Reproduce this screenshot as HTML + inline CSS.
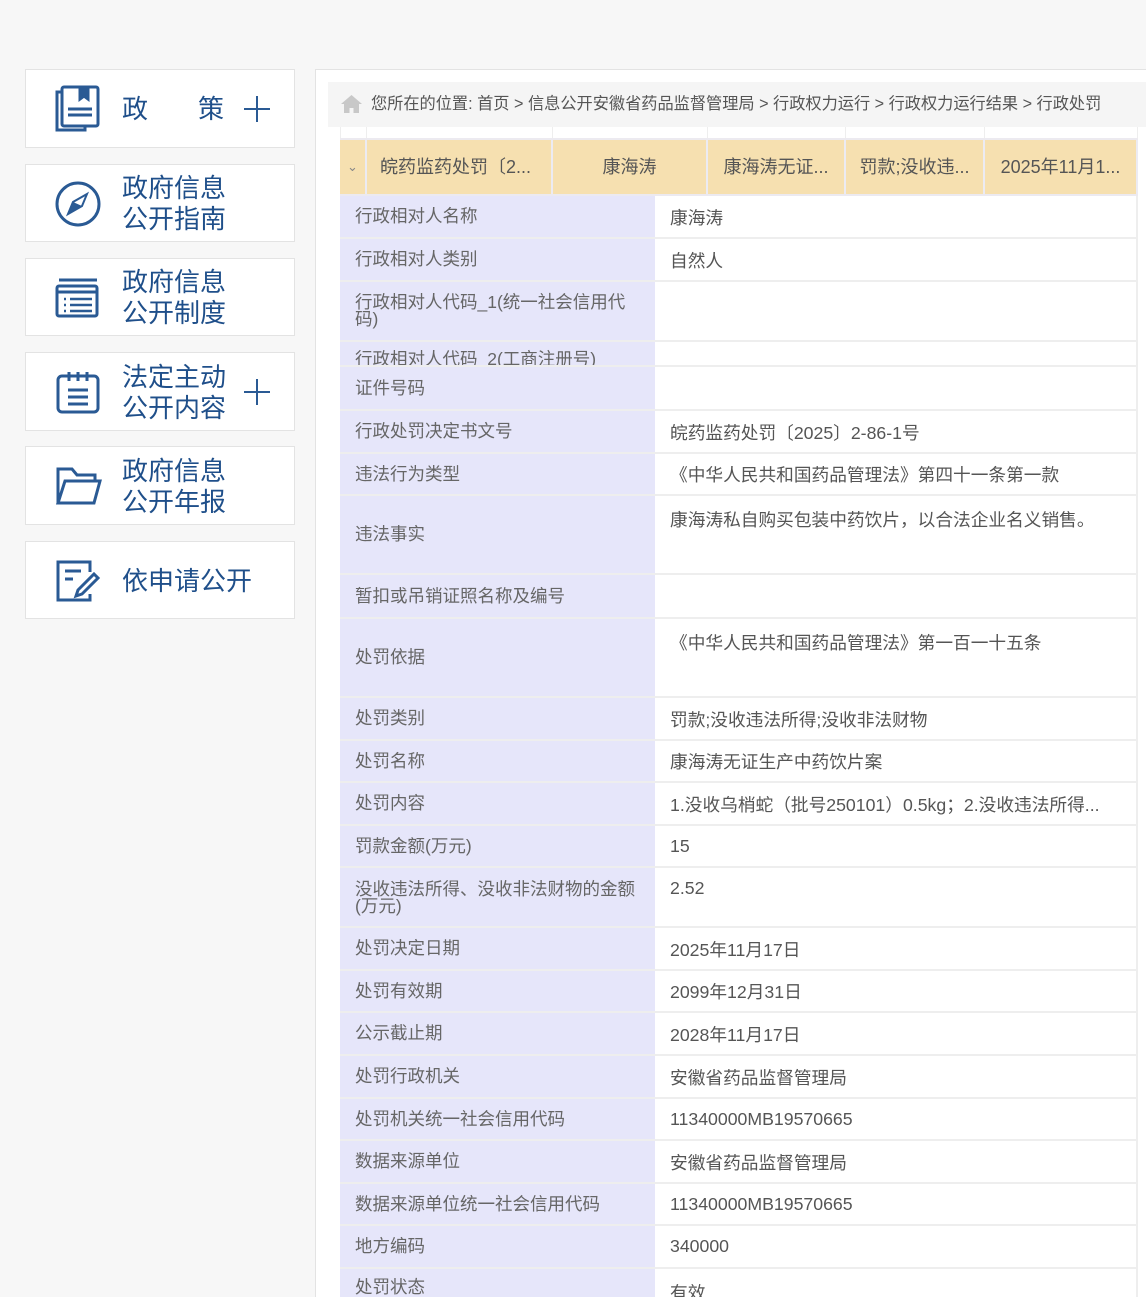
<!DOCTYPE html>
<html><head><meta charset="utf-8">
<style>
*{margin:0;padding:0;box-sizing:border-box}
html,body{width:1146px;height:1297px;overflow:hidden;background:#f7f7f7;font-family:"Liberation Sans","Noto Sans CJK SC",sans-serif;position:relative}
.nav{position:absolute;left:25px;width:270px;background:#fff;border:1px solid #e3e3e3}
.nav svg{position:absolute;left:28px}
.nav .t{position:absolute;left:96px;color:#1f4f8a;font-size:26px;line-height:31px}
.nav .p{position:absolute;left:218px;width:26px;height:26px}
.nav .p:before{content:"";position:absolute;left:0;top:12px;width:26px;height:2px;background:#2a5a94}
.nav .p:after{content:"";position:absolute;left:12px;top:0;width:2px;height:26px;background:#2a5a94}
.main{position:absolute;left:315px;top:69px;width:840px;height:1228px;background:#fff;border:1px solid #e3e3e3;border-bottom:none}
.bc{position:absolute;left:328px;top:82px;width:818px;height:45px;background:#f5f5f5;font-size:16.2px;color:#555;line-height:45px;padding-left:43px;white-space:nowrap}
.r{position:absolute;left:340px;width:798px;border-bottom:2px solid #eee;overflow:hidden}
.r .l{position:absolute;left:0;top:0;bottom:0;width:315px;background:#e6e6fa;color:#666;font-size:17.5px;padding:0 15px;display:flex;align-items:center;line-height:17px}
.r .v{position:absolute;left:315px;top:0;bottom:0;right:0;border-right:2px solid #eee;color:#555;font-size:17.7px;padding:0 15px;display:flex;align-items:center;white-space:nowrap}
.r .v.top{align-items:flex-start;padding-top:10px}
.r .l.top{align-items:flex-start;padding-top:13px}
.hd{position:absolute;top:140px;height:54px;background:#f6e0b0;color:#555;font-size:18px;line-height:54px;text-align:center;border-right:2px solid #ecebf2;white-space:nowrap;overflow:hidden}
.sp{position:absolute;top:127px;height:13px;border-right:1px solid #eee}
</style></head><body>

<div class="nav" style="top:69px;height:79px">
<svg style="top:14px" width="48" height="50" viewBox="0 0 48 50" fill="none" stroke="#2a5a94" stroke-width="3"><path d="M8 8H3v38h28v-4"/><rect x="8" y="3" width="36" height="39" rx="2"/><path d="M26 3v12l4-3 4 3V3" fill="#2a5a94"/><path d="M14 25h24M14 31h24"/></svg>
<div class="t" style="top:24px">政<span style="margin-left:50px">策</span></div><div class="p" style="top:26px"></div></div>

<div class="nav" style="top:164px;height:78px">
<svg style="top:15px" width="48" height="48" viewBox="0 0 48 48" fill="none" stroke="#2a5a94" stroke-width="3"><circle cx="24" cy="24" r="21"/><path d="M33 14l-14 8-5 12 14-8z" stroke-width="2"/><path d="M19 22l9 4-14 8z" fill="#2a5a94" stroke="none"/></svg>
<div class="t" style="top:8px">政府信息<br>公开指南</div></div>

<div class="nav" style="top:258px;height:78px">
<svg style="top:17px" width="48" height="44" viewBox="0 0 48 44" fill="none" stroke="#2a5a94" stroke-width="3"><path d="M5 4h38"/><rect x="3" y="10" width="40" height="30" rx="2"/><path d="M3 16h40"/><path d="M10 23h2M16 23h22M10 29h2M16 29h22M10 35h2M16 35h22" stroke-width="2.5"/></svg>
<div class="t" style="top:8px">政府信息<br>公开制度</div></div>

<div class="nav" style="top:352px;height:79px">
<svg style="top:17px" width="48" height="44" viewBox="0 0 48 44" fill="none" stroke="#2a5a94" stroke-width="3"><rect x="4" y="6" width="40" height="36" rx="4"/><path d="M15 2v9M33 2v9M24 2v9M14 20h20M14 27h20M14 34h20"/></svg>
<div class="t" style="top:9px">法定主动<br>公开内容</div><div class="p" style="top:26px"></div></div>

<div class="nav" style="top:446px;height:79px">
<svg style="top:18px" width="48" height="42" viewBox="0 0 48 42" fill="none" stroke="#2a5a94" stroke-width="3"><path d="M4 38V4h14l5 6h18v6"/><path d="M4 38l7-22h35l-6 22z"/></svg>
<div class="t" style="top:9px">政府信息<br>公开年报</div></div>

<div class="nav" style="top:541px;height:78px">
<svg style="top:16px" width="48" height="46" viewBox="0 0 48 46" fill="none" stroke="#2a5a94" stroke-width="3"><path d="M36 14V4H4v38h32v-6"/><path d="M11 13h16M11 21h8"/><path d="M40 16l4 4-16 16-6 2 2-6z"/></svg>
<div class="t" style="top:24px">依申请公开</div></div>

<div class="main"></div>
<div class="bc"><svg style="position:absolute;left:13px;top:13px" width="21" height="18" viewBox="0 0 21 18"><path d="M10.5 0L0 9h3v9h5.5v-5h4v5H18V9h3z" fill="#c8c8c8"/></svg>您所在的位置:&nbsp;首页 &gt; 信息公开安徽省药品监督管理局 &gt; 行政权力运行 &gt; 行政权力运行结果 &gt; 行政处罚</div>

<div class="sp" style="left:340px;width:27px;border-left:1px solid #eee"></div>
<div class="sp" style="left:367px;width:186px"></div>
<div class="sp" style="left:553px;width:155px"></div>
<div class="sp" style="left:708px;width:138px"></div>
<div class="sp" style="left:846px;width:139px"></div>
<div class="sp" style="left:985px;width:153px"></div>
<div style="position:absolute;left:340px;top:138px;width:798px;height:2px;background:#eceaf0"></div>

<div class="hd" style="left:340px;width:27px;font-size:13px;color:#888">&#8964;</div>
<div class="hd" style="left:367px;width:186px;text-align:left;padding-left:13px">皖药监药处罚〔2...</div>
<div class="hd" style="left:553px;width:155px">康海涛</div>
<div class="hd" style="left:708px;width:138px">康海涛无证...</div>
<div class="hd" style="left:846px;width:139px">罚款;没收违...</div>
<div class="hd" style="left:985px;width:153px">2025年11月1...</div>
<div style="position:absolute;left:340px;top:194px;width:798px;height:2px;background:#eceaf0"></div>

<div class="r" style="top:196px;height:43px"><div class="l">行政相对人名称</div><div class="v">康海涛</div></div>
<div class="r" style="top:239px;height:43px"><div class="l">行政相对人类别</div><div class="v">自然人</div></div>
<div class="r" style="top:282px;height:60px"><div class="l">行政相对人代码_1(统一社会信用代码)</div><div class="v"></div></div>
<div class="r" style="top:342px;height:25px"><div class="l" style="align-items:flex-start;padding-top:9px">行政相对人代码_2(工商注册号)</div><div class="v"></div></div>
<div class="r" style="top:367px;height:44px"><div class="l">证件号码</div><div class="v"></div></div>
<div class="r" style="top:411px;height:43px"><div class="l">行政处罚决定书文号</div><div class="v">皖药监药处罚〔2025〕2-86-1号</div></div>
<div class="r" style="top:454px;height:42px"><div class="l">违法行为类型</div><div class="v">《中华人民共和国药品管理法》第四十一条第一款</div></div>
<div class="r" style="top:496px;height:79px"><div class="l">违法事实</div><div class="v top">康海涛私自购买包装中药饮片，以合法企业名义销售。</div></div>
<div class="r" style="top:575px;height:44px"><div class="l">暂扣或吊销证照名称及编号</div><div class="v"></div></div>
<div class="r" style="top:619px;height:79px"><div class="l">处罚依据</div><div class="v top">《中华人民共和国药品管理法》第一百一十五条</div></div>
<div class="r" style="top:698px;height:43px"><div class="l">处罚类别</div><div class="v">罚款;没收违法所得;没收非法财物</div></div>
<div class="r" style="top:741px;height:42px"><div class="l">处罚名称</div><div class="v">康海涛无证生产中药饮片案</div></div>
<div class="r" style="top:783px;height:43px"><div class="l">处罚内容</div><div class="v">1.没收乌梢蛇（批号250101）0.5kg；2.没收违法所得...</div></div>
<div class="r" style="top:826px;height:42px"><div class="l">罚款金额(万元)</div><div class="v">15</div></div>
<div class="r" style="top:868px;height:60px"><div class="l top">没收违法所得、没收非法财物的金额(万元)</div><div class="v top">2.52</div></div>
<div class="r" style="top:928px;height:43px"><div class="l">处罚决定日期</div><div class="v">2025年11月17日</div></div>
<div class="r" style="top:971px;height:42px"><div class="l">处罚有效期</div><div class="v">2099年12月31日</div></div>
<div class="r" style="top:1013px;height:43px"><div class="l">公示截止期</div><div class="v">2028年11月17日</div></div>
<div class="r" style="top:1056px;height:43px"><div class="l">处罚行政机关</div><div class="v">安徽省药品监督管理局</div></div>
<div class="r" style="top:1099px;height:42px"><div class="l">处罚机关统一社会信用代码</div><div class="v">11340000MB19570665</div></div>
<div class="r" style="top:1141px;height:43px"><div class="l">数据来源单位</div><div class="v">安徽省药品监督管理局</div></div>
<div class="r" style="top:1184px;height:42px"><div class="l">数据来源单位统一社会信用代码</div><div class="v">11340000MB19570665</div></div>
<div class="r" style="top:1226px;height:43px"><div class="l">地方编码</div><div class="v">340000</div></div>
<div class="r" style="top:1269px;height:28px;border-bottom:none"><div class="l" style="align-items:flex-start;padding-top:10px">处罚状态</div><div class="v" style="align-items:flex-start;padding-top:10px">有效</div></div>

</body></html>
